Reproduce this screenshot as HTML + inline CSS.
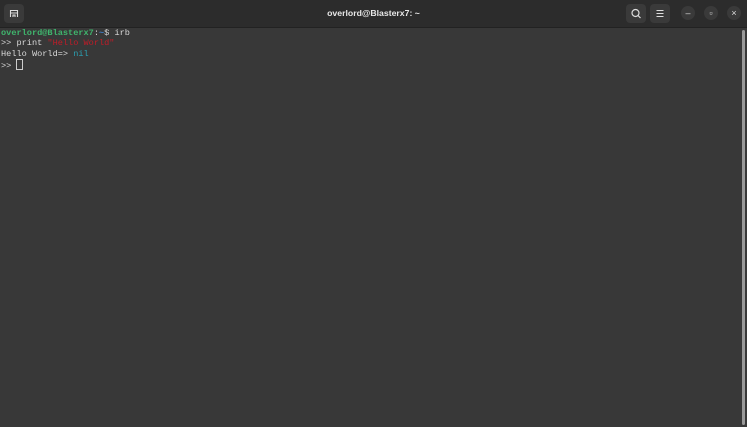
<html><head><style>
body{margin:0;width:747px;height:427px;background:#383838;overflow:hidden;font-family:"Liberation Sans",sans-serif}
.hb{position:absolute;left:0;top:0;width:747px;height:27px;background:#2c2c2c;border-bottom:1px solid #222}
.t{position:absolute;left:0;width:747px;top:8px;text-align:center;color:#e8e8e8;font-weight:bold;font-size:8.7px}
.btn{position:absolute;top:4px;width:20px;height:19px;background:#3a3a3a;border-radius:4px}
.c{position:absolute;top:6px;width:14px;height:14px;border-radius:50%;background:#3a3a3a;color:#ddd;font-size:9px;text-align:center;line-height:14px}
pre{position:absolute;left:1px;top:28px;margin:0;font-family:"Liberation Mono",monospace;font-size:8.6px;line-height:10.3px;color:#d8d8d8}
.g{color:#3fb56d;font-weight:bold}.b{color:#3f7fc8;font-weight:bold}.r{color:#c01c28}.n{color:#2aa1b3}
.sb{position:absolute;left:742px;top:30px;width:3px;height:395px;background:#9a9a9a;border-radius:2px}
</style></head><body>
<div class="hb">
<div class="btn" style="left:4px"><svg width="20" height="19"><path d="M6.5 13V6.5h7V13M6.5 9h7M9 13v-2h2v2" fill="none" stroke="#ddd" stroke-width="1.1"/></svg></div>
<div class="t">overlord@Blasterx7: ~</div>
<div class="btn" style="left:626px"><svg width="20" height="19"><circle cx="9.5" cy="9" r="3.5" fill="none" stroke="#ddd" stroke-width="1.2"/><path d="M12 11.5l2.5 2.5" stroke="#ddd" stroke-width="1.2"/></svg></div>
<div class="btn" style="left:650px"><svg width="20" height="19"><path d="M6.5 6.5h7M6.5 9.5h7M6.5 12.5h7" stroke="#ddd" stroke-width="1.1"/></svg></div>
<div class="c" style="left:681px">–</div>
<div class="c" style="left:704px">▫</div>
<div class="c" style="left:727px">×</div>
</div>
<pre><span class="g">overlord@Blasterx7</span>:<span class="b">~</span>$ irb
&gt;&gt; print <span class="r">"Hello World"</span>
Hello World=&gt; <span class="n">nil</span>
&gt;&gt; <span style="display:inline-block;width:5px;height:9px;border:1px solid #ccc;vertical-align:-2px"></span></pre>
<div class="sb"></div>
</body></html>
